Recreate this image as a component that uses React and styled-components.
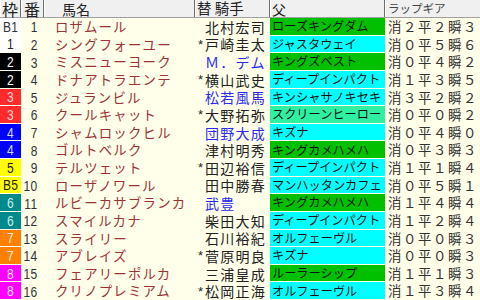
import React from "react";
import styled, { createGlobalStyle } from "styled-components";

const GlobalStyle = createGlobalStyle`
  html, body { margin: 0; padding: 0; background: #ffffea; }
  body { width: 480px; height: 300px; overflow: hidden; }
`;

const JP = `"Noto Sans CJK JP", "Noto Sans", sans-serif`;
const COLS = "21px 23px 151px 75px 115px 1fr";

const Table = styled.div`
  width: 480px;
  height: 300px;
  background: #ffffea;
  font-family: ${JP};
  line-height: 1;
`;

const HeaderRow = styled.div`
  display: grid;
  grid-template-columns: ${COLS};
  height: 17px;
  background: #f0f0f0;
  border-bottom: 1px solid #a0a0a0;
`;

const HeadCell = styled.div`
  display: flex;
  align-items: center;
  justify-content: ${(p) => (p.$center ? "center" : "flex-start")};
  padding-left: ${(p) => p.$pad || 0}px;
  border-right: ${(p) => (p.$last ? "none" : "1px solid #6e6e6e")};
  box-shadow: inset 1px 0 0 #ffffff;
  color: ${(p) => p.$color || "#222"};
  font-size: ${(p) => p.$size || 15}px;
  line-height: 1;
  white-space: pre;
  box-sizing: border-box;
`;

const Body = styled.div`
  display: grid;
  grid-template-columns: ${COLS};
  grid-auto-rows: 17.625px;
`;

const Waku = styled.div`
  height: calc(100% - 1px);
  display: flex;
  align-items: center;
  justify-content: center;
  background: ${(p) => p.$bg};
  color: ${(p) => p.$fg};
  font-family: "Liberation Sans", sans-serif;
  font-size: 15px;
  line-height: 1;
`;

const Narrow = styled.span`
  display: inline-block;
  transform: scaleX(0.8);
  transform-origin: ${(p) => p.$origin || "center"};
  letter-spacing: 0.5px;
  line-height: 1;
`;

const Num = styled.div`
  display: flex;
  align-items: center;
  justify-content: flex-end;
  padding-right: 6px;
  color: #333;
  font-family: "Liberation Sans", sans-serif;
  font-size: 15px;
  line-height: 1;
`;

const Name = styled.div`
  display: flex;
  align-items: center;
  padding-left: 11px;
  color: #9e3333;
  font-size: 13.4px;
  letter-spacing: 1.2px;
  line-height: 1;
  white-space: nowrap;
`;

const Jockey = styled.div`
  display: flex;
  align-items: center;
  padding-left: 1px;
  color: ${(p) => (p.$blue ? "#2a2af0" : "#222")};
  font-size: 14px;
  letter-spacing: 1.25px;
  line-height: 1;
  white-space: nowrap;
`;

const Mark = styled.span`
  display: inline-block;
  width: 9px;
  color: #222;
  font-family: "Liberation Sans", sans-serif;
  font-size: 13px;
  letter-spacing: 0;
  text-align: center;
`;

const Sire = styled.div`
  height: calc(100% - 1px);
  display: flex;
  align-items: center;
  padding-left: 2px;
  background: ${(p) => p.$bg};
  color: #111;
  font-size: 12.2px;
  line-height: 1;
  white-space: nowrap;
`;

const Lap = styled.div`
  display: flex;
  align-items: center;
  padding-left: 3px;
  color: #333;
  font-size: 13.4px;
  letter-spacing: 1.6px;
  line-height: 1;
  white-space: nowrap;
`;

const WAKU = {
  B1: ["#ffffff", "#333"],
  1: ["#ffffff", "#222"],
  2: ["#000000", "#ffffff"],
  3: ["#ff2a2a", "#ffd6d6"],
  4: ["#0000ff", "#d8d8ff"],
  5: ["#ffff00", "#222"],
  B5: ["#ffff00", "#222"],
  6: ["#008a8a", "#d6eeee"],
  7: ["#ff8000", "#fff0e0"],
  8: ["#ff00ff", "#ffe0ff"],
};

const SIRE = { g: "#00c000", c: "#00ffff", a: "#2ef0a0" };

const rows = [
  ["B1", 1, "ロザムール", "", "北村宏司", false, "ローズキングダム", "g", "消２平２瞬３"],
  ["1", 2, "シングフォーユー", "*", "戸崎圭太", false, "ジャスタウェイ", "c", "消０平５瞬６"],
  ["2", 3, "ミスニューヨーク", "", "Ｍ．デム", true, "キングズベスト", "g", "消０平４瞬２"],
  ["2", 4, "ドナアトラエンテ", "*", "横山武史", false, "ディープインパクト", "c", "消１平３瞬５"],
  ["3", 5, "ジュランビル", "", "松若風馬", true, "キンシャサノキセキ", "c", "消３平２瞬２"],
  ["3", 6, "クールキャット", "*", "大野拓弥", false, "スクリーンヒーロー", "a", "消０平０瞬２"],
  ["4", 7, "シャムロックヒル", "", "団野大成", true, "キズナ", "c", "消０平４瞬０"],
  ["4", 8, "ゴルトベルク", "", "津村明秀", false, "キングカメハメハ", "g", "消０平３瞬３"],
  ["5", 9, "テルツェット", "*", "田辺裕信", false, "ディープインパクト", "c", "消１平１瞬４"],
  ["B5", 10, "ローザノワール", "", "田中勝春", false, "マンハッタンカフェ", "c", "消０平５瞬１"],
  ["6", 11, "ルビーカサブランカ", "", "武豊", true, "キングカメハメハ", "g", "消１平４瞬４"],
  ["6", 12, "スマイルカナ", "", "柴田大知", false, "ディープインパクト", "c", "消１平２瞬４"],
  ["7", 13, "スライリー", "", "石川裕紀", false, "オルフェーヴル", "c", "消０平０瞬３"],
  ["7", 14, "アブレイズ", "*", "菅原明良", false, "キズナ", "c", "消０平０瞬３"],
  ["8", 15, "フェアリーポルカ", "", "三浦皇成", false, "ルーラーシップ", "g", "消１平１瞬３"],
  ["8", 16, "クリノプレミアム", "*", "松岡正海", false, "オルフェーヴル", "c", "消１平３瞬４"],
];

export default function App() {
  return (
    <Table>
      <GlobalStyle />
      <HeaderRow>
        <HeadCell $center $size={16}>枠</HeadCell>
        <HeadCell $center $size={16}>番</HeadCell>
        <HeadCell $pad={18} $size={14}>馬名</HeadCell>
        <HeadCell $pad={2} $size={14.5}>替 騎手</HeadCell>
        <HeadCell $pad={2} $size={14}>父</HeadCell>
        <HeadCell $pad={3} $size={11.5} $color="#444" $last>ラップギア</HeadCell>
      </HeaderRow>
      <Body>
        {rows.map(([waku, num, name, mark, jockey, blue, sire, sc, lap]) => {
          const [bg, fg] = WAKU[waku];
          return (
            <React.Fragment key={num}>
              <Waku $bg={bg} $fg={fg}>
                <Narrow>{waku}</Narrow>
              </Waku>
              <Num>
                <Narrow $origin="right">{num}</Narrow>
              </Num>
              <Name>{name}</Name>
              <Jockey $blue={blue}>
                <Mark>{mark}</Mark>
                {jockey}
              </Jockey>
              <Sire $bg={SIRE[sc]}>{sire}</Sire>
              <Lap>{lap}</Lap>
            </React.Fragment>
          );
        })}
      </Body>
    </Table>
  );
}
